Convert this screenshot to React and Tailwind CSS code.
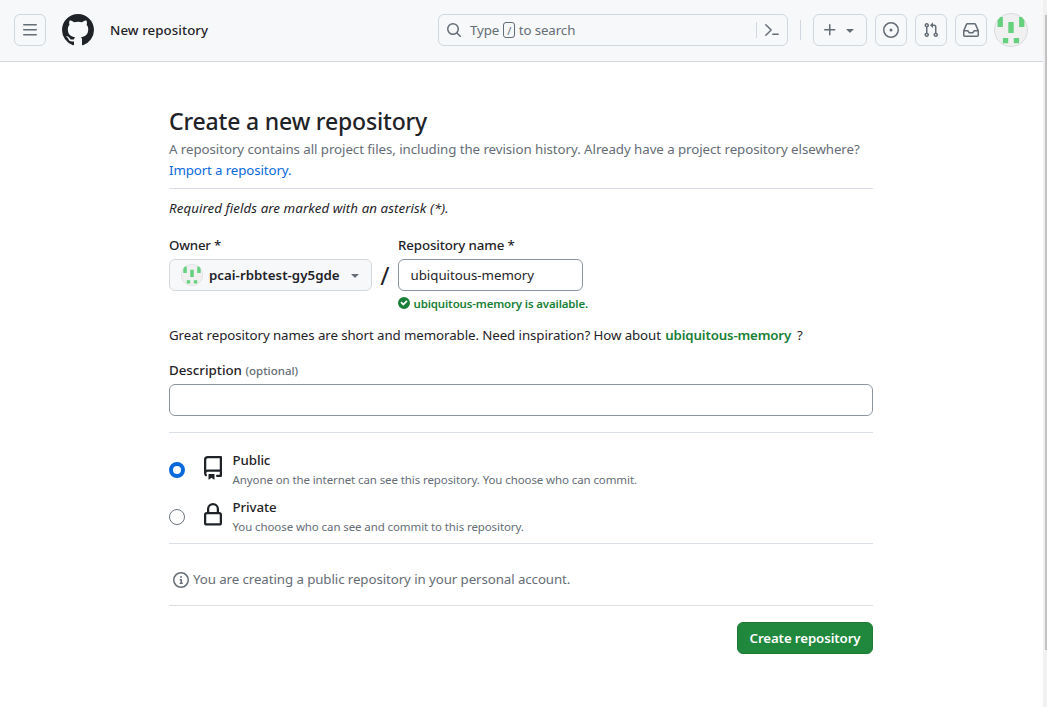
import React from "react";

const ICONS = {
  bars: [16, "M1 2.75A.75.75 0 0 1 1.75 2h12.5a.75.75 0 0 1 0 1.5H1.75A.75.75 0 0 1 1 2.75Zm0 5A.75.75 0 0 1 1.75 7h12.5a.75.75 0 0 1 0 1.5H1.75A.75.75 0 0 1 1 7.75ZM1.75 12h12.5a.75.75 0 0 1 0 1.5H1.75a.75.75 0 0 1 0-1.5Z"],
  github: [16, "M8 0c4.42 0 8 3.58 8 8a8.013 8.013 0 0 1-5.45 7.59c-.4.08-.55-.17-.55-.38 0-.27.01-1.13.01-2.2 0-.75-.25-1.23-.54-1.48 1.78-.2 3.65-.88 3.65-3.95 0-.88-.31-1.59-.82-2.15.08-.2.36-1.02-.08-2.12 0 0-.67-.22-2.2.82-.64-.18-1.32-.27-2-.27-.68 0-1.36.09-2 .27-1.53-1.03-2.2-.82-2.2-.82-.44 1.1-.16 1.92-.08 2.12-.51.56-.82 1.28-.82 2.15 0 3.06 1.86 3.75 3.64 3.95-.23.2-.44.55-.51 1.07-.46.21-1.61.55-2.33-.66-.15-.24-.6-.83-1.23-.82-.67.01-.27.38.01.53.34.19.73.9.82 1.13.16.45.68 1.31 2.69.94 0 .67.01 1.3.01 1.49 0 .21-.15.45-.55.38A7.995 7.995 0 0 1 0 8c0-4.42 3.58-8 8-8Z"],
  search: [16, "M10.68 11.74a6 6 0 0 1-7.922-8.982 6 6 0 0 1 8.982 7.922l3.04 3.04a.749.749 0 0 1-.326 1.275.749.749 0 0 1-.734-.215ZM11.5 7a4.499 4.499 0 1 0-8.997 0A4.499 4.499 0 0 0 11.5 7Z"],
  plus: [16, "M7.75 2a.75.75 0 0 1 .75.75V7h4.25a.75.75 0 0 1 0 1.5H8.5v4.25a.75.75 0 0 1-1.5 0V8.5H2.75a.75.75 0 0 1 0-1.5H7V2.75A.75.75 0 0 1 7.75 2Z"],
  caret: [16, "m4.427 7.427 3.396 3.396a.25.25 0 0 0 .354 0l3.396-3.396A.25.25 0 0 0 11.396 7H4.604a.25.25 0 0 0-.177.427Z"],
  issue: [16, "M8 9.5a1.5 1.5 0 1 0 0-3 1.5 1.5 0 0 0 0 3Z M8 0a8 8 0 1 1 0 16A8 8 0 0 1 8 0ZM1.5 8a6.5 6.5 0 1 0 13 0 6.5 6.5 0 0 0-13 0Z"],
  pull: [16, "M1.5 3.25a2.25 2.25 0 1 1 3 2.122v5.256a2.251 2.251 0 1 1-1.5 0V5.372A2.25 2.25 0 0 1 1.5 3.25Zm5.677-.177L9.573.677A.25.25 0 0 1 10 .854V2.5h1A2.5 2.5 0 0 1 13.5 5v5.628a2.251 2.251 0 1 1-1.5 0V5a1 1 0 0 0-1-1h-1v1.646a.25.25 0 0 1-.427.177L7.177 3.427a.25.25 0 0 1 0-.354ZM3.75 2.5a.75.75 0 1 0 0 1.5.75.75 0 0 0 0-1.5Zm0 9.5a.75.75 0 1 0 0 1.5.75.75 0 0 0 0-1.5Zm8.25.75a.75.75 0 1 0 1.5 0 .75.75 0 0 0-1.5 0Z"],
  inbox: [16, "M2.8 2.06A1.75 1.75 0 0 1 4.41 1h7.18c.7 0 1.333.417 1.61 1.06l2.74 6.395c.04.093.06.194.06.295v4.5A1.75 1.75 0 0 1 14.25 15H1.75A1.75 1.75 0 0 1 0 13.25v-4.5c0-.101.02-.202.06-.295Zm1.61.44a.25.25 0 0 0-.23.152L1.887 8H4.75a.75.75 0 0 1 .6.3L6.625 10h2.75l1.275-1.7a.75.75 0 0 1 .6-.3h2.863L11.82 2.652a.25.25 0 0 0-.23-.152Zm10.09 7h-2.875l-1.275 1.7a.75.75 0 0 1-.6.3h-3.5a.75.75 0 0 1-.6-.3L4.375 9.5H1.5v3.75c0 .138.112.25.25.25h12.5a.25.25 0 0 0 .25-.25Z"],
  check: [12, "M6 0a6 6 0 1 1 0 12A6 6 0 0 1 6 0Zm-.705 8.737L9.63 4.403 8.392 3.166 5.295 6.263l-1.7-1.702L2.356 5.8l2.938 2.938Z"],
  info: [16, "M0 8a8 8 0 1 1 16 0A8 8 0 0 1 0 8Zm8-6.5a6.5 6.5 0 1 0 0 13 6.5 6.5 0 0 0 0-13ZM6.5 7.75A.75.75 0 0 1 7.25 7h1a.75.75 0 0 1 .75.75v2.75h.25a.75.75 0 0 1 0 1.5h-2a.75.75 0 0 1 0-1.5h.25v-2h-.25a.75.75 0 0 1-.75-.75ZM8 6a1 1 0 1 1 0-2 1 1 0 0 1 0 2Z"],
  repo: [16, "M2 2.5A2.5 2.5 0 0 1 4.5 0h8.75a.75.75 0 0 1 .75.75v12.5a.75.75 0 0 1-.75.75h-2.5a.75.75 0 0 1 0-1.5h1.75v-2h-8a1 1 0 0 0-.714 1.7.75.75 0 1 1-1.072 1.05A2.495 2.495 0 0 1 2 11.5Zm10.5-1h-8a1 1 0 0 0-1 1v6.708A2.486 2.486 0 0 1 4.5 9h8ZM5 12.25a.25.25 0 0 1 .25-.25h3.5a.25.25 0 0 1 .25.25v3.25a.25.25 0 0 1-.4.2l-1.45-1.087a.249.249 0 0 0-.3 0L5.4 15.7a.25.25 0 0 1-.4-.2Z"],
  lock: [16, "M4 4a4 4 0 0 1 8 0v2h.25c.966 0 1.75.784 1.75 1.75v5.5A1.75 1.75 0 0 1 12.25 15h-8.5A1.75 1.75 0 0 1 2 13.25v-5.5C2 6.784 2.784 6 3.75 6H4Zm8.25 3.5h-8.5a.25.25 0 0 0-.25.25v5.5c0 .138.112.25.25.25h8.5a.25.25 0 0 0 .25-.25v-5.5a.25.25 0 0 0-.25-.25ZM10.5 6V4a2.5 2.5 0 1 0-5 0v2Z"],
};

function Icon({ name, className = "size-4" }) {
  const [size, d] = ICONS[name];
  return (
    <svg viewBox={`0 0 ${size} ${size}`} fill="currentColor" className={`shrink-0 ${className}`}>
      <path d={d} />
    </svg>
  );
}

function Avatar({ className }) {
  return (
    <svg viewBox="0 0 34 34" className={`shrink-0 ${className}`}>
      <circle cx="17" cy="17" r="16.5" fill="#f0f0f0" stroke="#d9dcdf" />
      <g fill="#65d17e">
        <path d="M3.6 13.9V7.5L6.2 4h2.7v9.9z" />
        <path d="M30.4 13.9V7.5L27.8 4h-2.7v9.9z" />
        <path d="M14.3 9h5.4v10.9h-5.4zM8.9 25h5.3v5.3H8.9zM19.8 25h5.3v5.3h-5.3z" />
      </g>
    </svg>
  );
}

function HeaderButton({ children, className = "w-8" }) {
  return (
    <button className={`flex h-8 shrink-0 items-center justify-center rounded-md border border-[#d0d7de] text-[#656d76] ${className}`}>
      {children}
    </button>
  );
}

function Header() {
  return (
    <header className="flex h-[62px] w-[1043px] items-center border-b border-[#d0d7de] bg-[#f6f8fa] pb-px pl-3.5 pr-[15px]">
      <HeaderButton><Icon name="bars" /></HeaderButton>
      <Icon name="github" className="ml-4 size-8" />
      <span className="ml-4 font-medium tracking-[0.07px]">New repository</span>
      <div className="ml-auto flex h-8 w-[350px] items-center rounded-md border border-[#d0d7de] pl-[7px] pr-[7px] text-[#656d76]">
        <Icon name="search" />
        <span className="ml-2 tracking-[-0.1px]">Type</span>
        <span className="ml-1 flex h-4 w-3 items-center justify-center rounded-[3px] border border-[#656d76] text-[11px]">/</span>
        <span className="ml-[3.5px] tracking-[-0.1px]">to search</span>
        <span className="ml-auto h-4 w-px bg-[#d0d7de]" />
        <svg viewBox="0 0 16 16" fill="none" stroke="currentColor" strokeWidth="1.5" strokeLinecap="round" strokeLinejoin="round" className="ml-[7px] size-4">
          <path d="M1.8 2.8 7.2 8l-5.4 5.2M8.8 12.3h5.4" />
        </svg>
      </div>
      <span className="ml-3 h-5 w-px bg-[#d0d7de]" />
      <HeaderButton className="ml-3 w-[54px] gap-1"><Icon name="plus" /><Icon name="caret" /></HeaderButton>
      <HeaderButton className="ml-2 w-8"><Icon name="issue" /></HeaderButton>
      <HeaderButton className="ml-2 w-8"><Icon name="pull" /></HeaderButton>
      <HeaderButton className="ml-2 w-8"><Icon name="inbox" /></HeaderButton>
      <Avatar className="ml-[7px] size-[34px]" />
    </header>
  );
}

function Visibility({ icon, title, text, checked }) {
  return (
    <label className="flex h-[47px] items-center">
      <span className={`size-4 shrink-0 rounded-full bg-white ${checked ? "border-4 border-[#0969da]" : "border border-[#6e7781]"}`} />
      <Icon name={icon} className="-mt-1 ml-4 size-6" />
      <span className="ml-[7.5px] flex flex-col">
        <span className="h-5 font-medium leading-5 tracking-[-0.1px]">{title}</span>
        <span className="h-[19px] text-[11.5px] leading-[19px] tracking-[-0.1px] text-[#656d76]">{text}</span>
      </span>
    </label>
  );
}

export default function App() {
  return (
    <div className="flex h-[707px] w-[1047px] overflow-hidden bg-white font-['Noto_Sans',sans-serif] text-[13.3px] leading-[21px] text-[#1f2328]">
      <div className="w-[1043px] shrink-0">
        <Header />
        <main className="ml-[169px] w-[704px] pt-[41px]">
          <h1 className="h-9 text-[23px] font-medium leading-9 tracking-[-0.17px]">Create a new repository</h1>
          <p className="whitespace-nowrap tracking-[-0.063px] text-[#656d76]">A repository contains all project files, including the revision history. Already have a project repository elsewhere?</p>
          <p className="h-[21px] tracking-[-0.12px]"><a className="text-[#0969da]">Import a repository.</a></p>
          <hr className="mt-[7px] border-[#d8dee4]" />
          <p className="mt-[9px] italic tracking-[0.07px]">Required fields are marked with an asterisk (*).</p>
          <div className="mt-4 flex">
            <div className="w-[203px]">
              <div className="h-6 font-medium tracking-[-0.2px]">Owner *</div>
              <button className="flex h-8 w-full items-center rounded-md border border-[#d5d8da] bg-[#f6f8fa] pl-[11px] font-semibold">
                <Avatar className="size-[22px]" />
                <span className="ml-1.5 tracking-[0.02px]">pcai-rbbtest-gy5gde</span>
                <Icon name="caret" className="ml-auto mr-2 size-4 text-[#656d76]" />
              </button>
            </div>
            <span className="w-[26px] pt-6 text-center text-[25px] leading-8">/</span>
            <div>
              <div className="h-6 font-medium tracking-[-0.12px]">Repository name *</div>
              <div className="flex h-8 w-[185px] items-center rounded-md border border-[#8c959f] pl-[11.5px] tracking-[-0.03px]">ubiquitous-memory</div>
              <div className="mt-1 flex h-4 items-center whitespace-nowrap text-[11.5px] font-semibold tracking-[-0.16px] text-[#1a7f37]">
                <Icon name="check" className="mr-[3.5px] size-3" />ubiquitous-memory is available.
              </div>
            </div>
          </div>
          <p className="mt-3.5 whitespace-nowrap tracking-[-0.087px]">Great repository names are short and memorable. Need inspiration? How about <span className="ml-px font-semibold tracking-[-0.17px] text-[#1a7f37]">ubiquitous-memory</span><span className="ml-1.5">?</span></p>
          <div className="mt-3.5 h-6"><span className="font-medium">Description</span> <span className="text-[11.5px] font-medium text-[#656d76]">(optional)</span></div>
          <div className="h-8 rounded-md border border-[#8c959f]" />
          <hr className="mt-4 border-[#d8dee4]" />
          <div className="mt-[13px]">
            <Visibility icon="repo" title="Public" text="Anyone on the internet can see this repository. You choose who can commit." checked />
            <Visibility icon="lock" title="Private" text="You choose who can see and commit to this repository." />
          </div>
          <hr className="mt-[3px] border-[#d8dee4]" />
          <div className="mt-[25px] flex h-[21px] items-center pl-1 text-[#656d76]">
            <Icon name="info" className="mr-1 size-4" /><span className="tracking-[-0.087px]">You are creating a public repository in your personal account.</span>
          </div>
          <hr className="mt-[15px] border-[#d8dee4]" />
          <button className="ml-auto mt-4 flex h-8 w-[136px] items-center justify-center rounded-md border border-[#1f7b36] bg-[#1f883d] font-semibold tracking-[-0.12px] text-white">Create repository</button>
        </main>
      </div>
      <div className="w-1 shrink-0 bg-[#f1f1f1] pl-0.5 pt-[15px]"><div className="h-[635px] bg-[#c1c1c1]" /></div>
    </div>
  );
}
